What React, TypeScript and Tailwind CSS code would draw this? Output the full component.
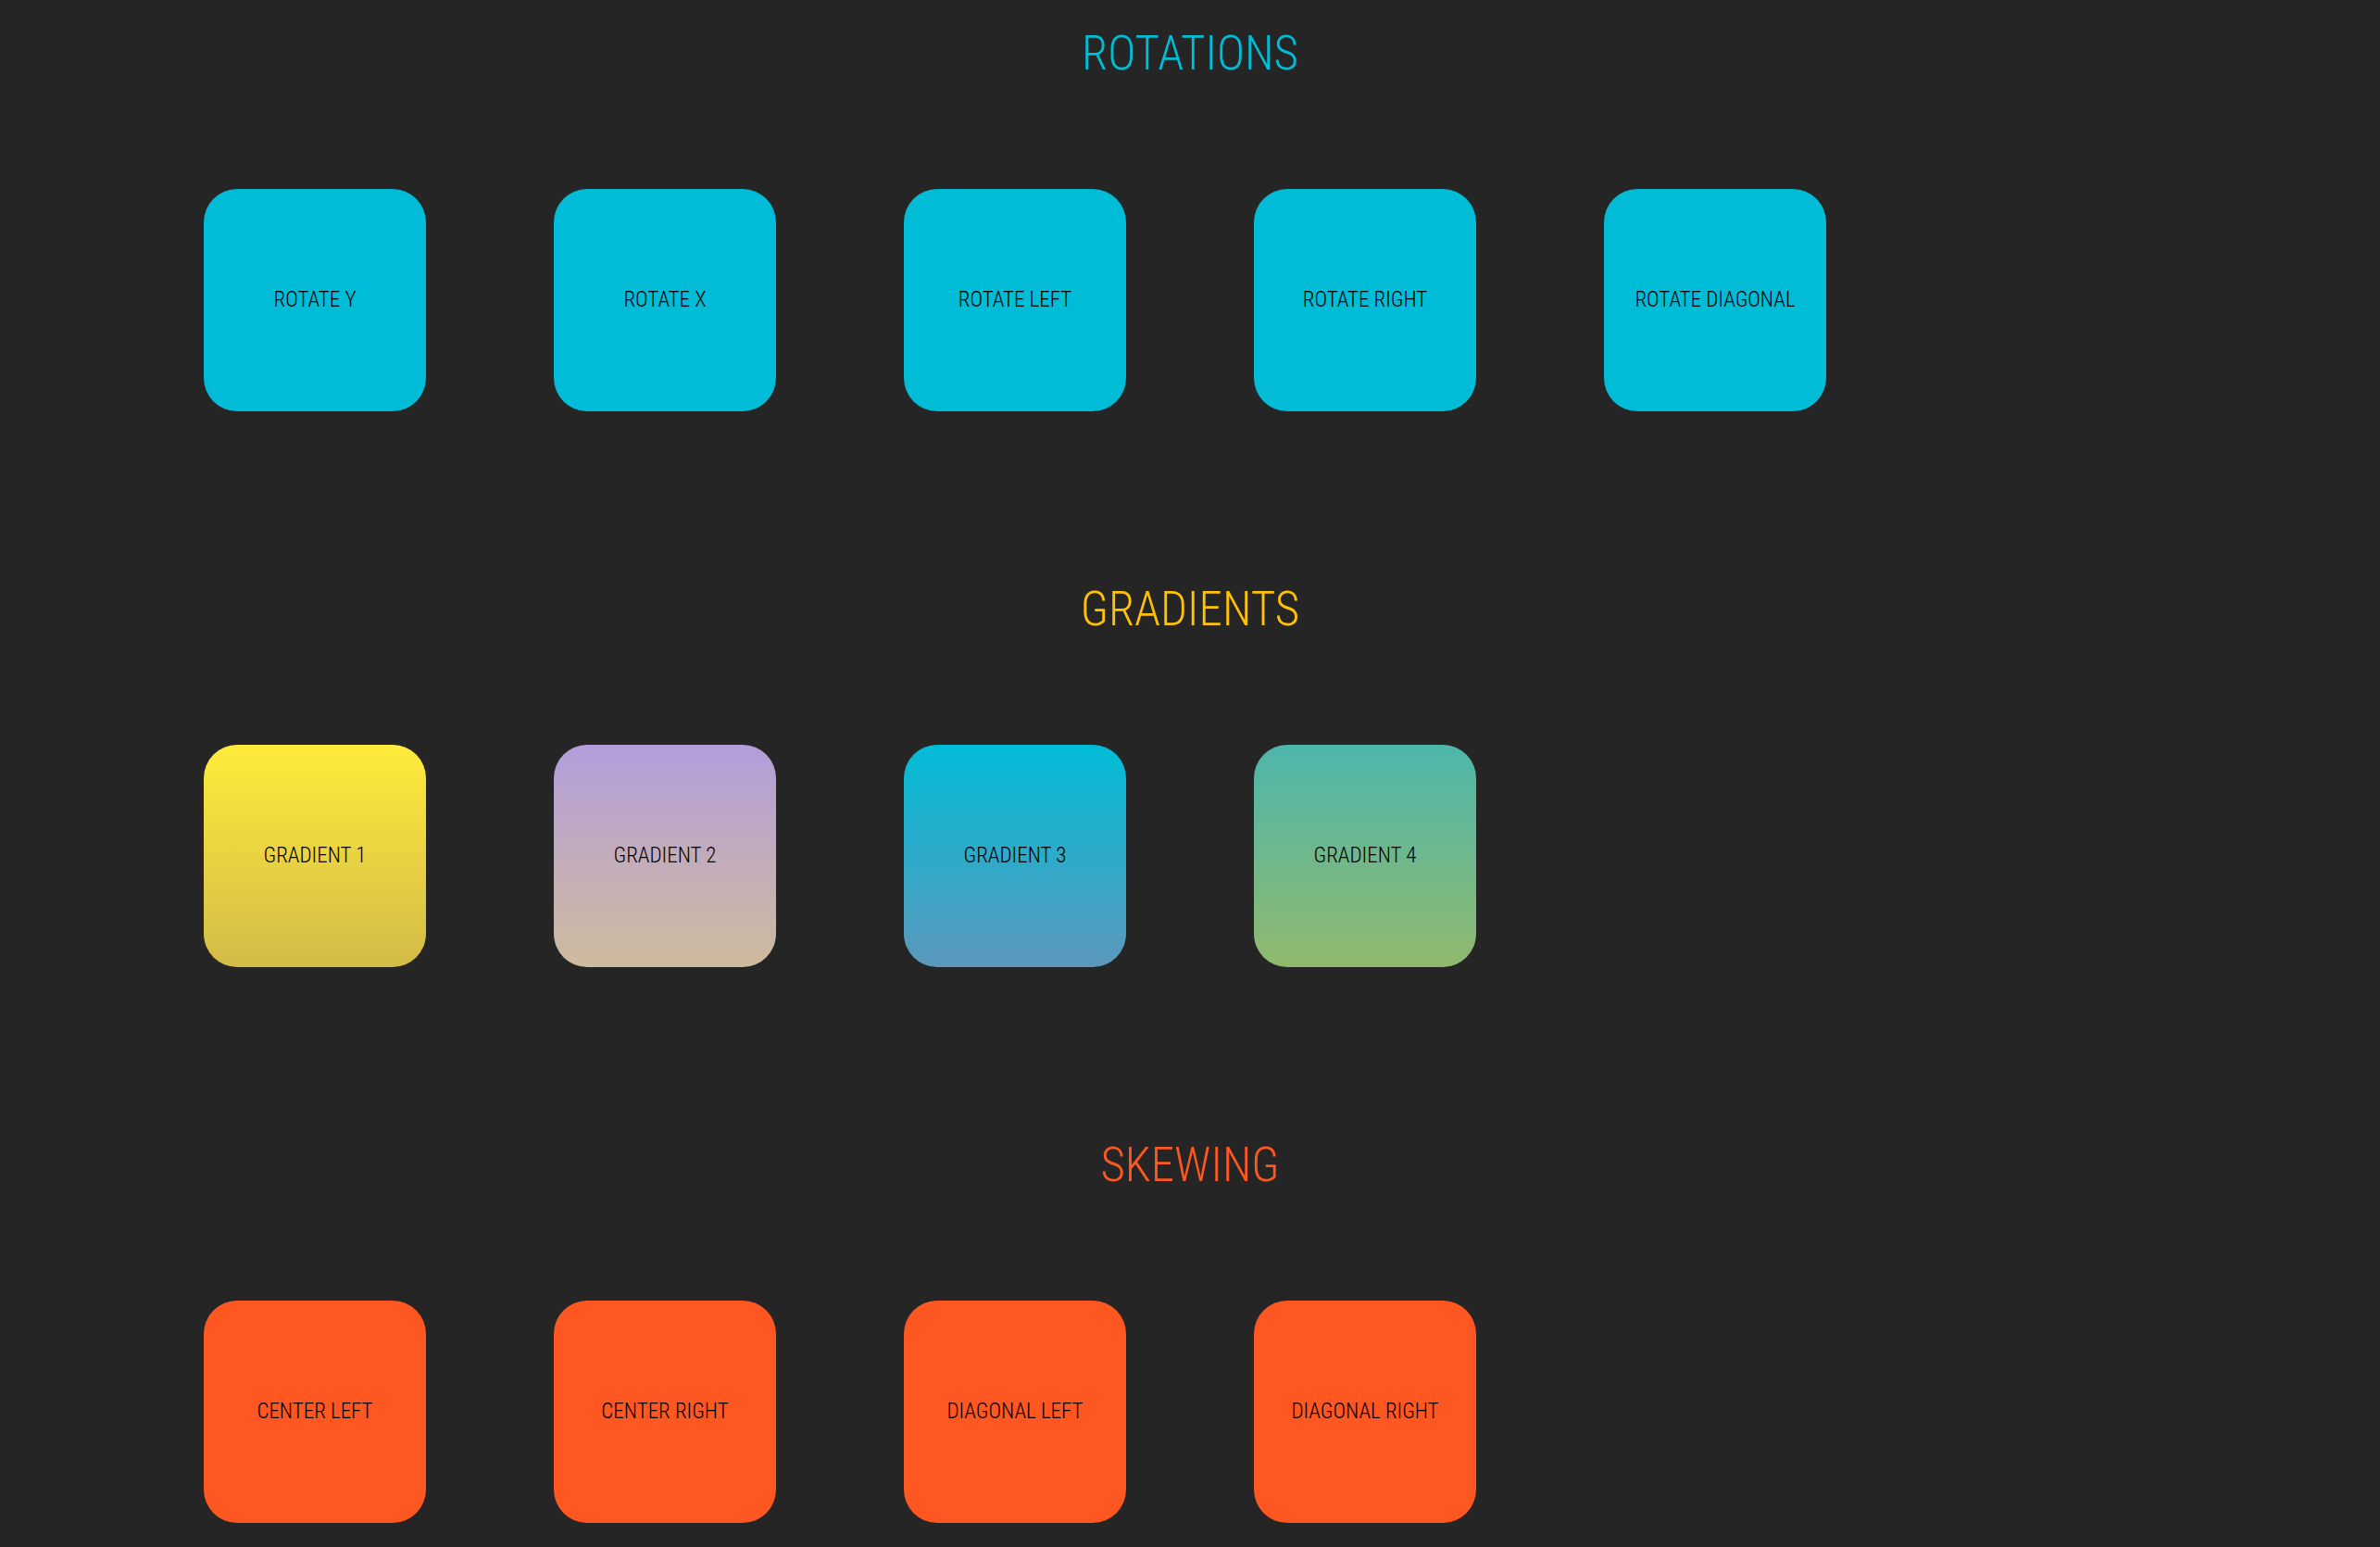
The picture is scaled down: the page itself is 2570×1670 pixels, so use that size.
type Tile = { label: string; fill: string };
type Group = { title: string; color: string; tiles: Tile[] };

const groups: Group[] = [
  {
    title: "ROTATIONS",
    color: "text-[#00bcd4]",
    tiles: [
      { label: "ROTATE Y", fill: "bg-[#00bcd7]" },
      { label: "ROTATE X", fill: "bg-[#00bcd7]" },
      { label: "ROTATE LEFT", fill: "bg-[#00bcd7]" },
      { label: "ROTATE RIGHT", fill: "bg-[#00bcd7]" },
      { label: "ROTATE DIAGONAL", fill: "bg-[#00bcd7]" },
    ],
  },
  {
    title: "GRADIENTS",
    color: "text-[#ffc107]",
    tiles: [
      { label: "GRADIENT 1", fill: "bg-[linear-gradient(#ffeb3b,#d4bb48)]" },
      { label: "GRADIENT 2", fill: "bg-[linear-gradient(#b39ddb,#cfbb9d)]" },
      { label: "GRADIENT 3", fill: "bg-[linear-gradient(#00bcd7,#5c98bc)]" },
      { label: "GRADIENT 4", fill: "bg-[linear-gradient(#4db6ac,#90b96d)]" },
    ],
  },
  {
    title: "SKEWING",
    color: "text-[#ff5722]",
    tiles: [
      { label: "CENTER LEFT", fill: "bg-[#ff5722]" },
      { label: "CENTER RIGHT", fill: "bg-[#ff5722]" },
      { label: "DIAGONAL LEFT", fill: "bg-[#ff5722]" },
      { label: "DIAGONAL RIGHT", fill: "bg-[#ff5722]" },
    ],
  },
];

export default function App() {
  return (
    <main className="flex min-h-screen flex-col gap-46 bg-[#252525] pt-7 pb-6 font-['Roboto_Condensed','Roboto',sans-serif]">
      {groups.map((group) => (
        <section key={group.title} className="flex flex-col gap-29">
          <h2 className={`text-center text-[51px] leading-[60px] font-light ${group.color}`}>
            {group.title}
          </h2>
          <div className="grid grid-cols-6 justify-items-center px-[151px]">
            {group.tiles.map((tile) => (
              <div
                key={tile.label}
                className={`flex size-60 items-center justify-center rounded-[36px] text-[23px] leading-7 font-light text-black ${tile.fill}`}
              >
                {tile.label}
              </div>
            ))}
          </div>
        </section>
      ))}
    </main>
  );
}
